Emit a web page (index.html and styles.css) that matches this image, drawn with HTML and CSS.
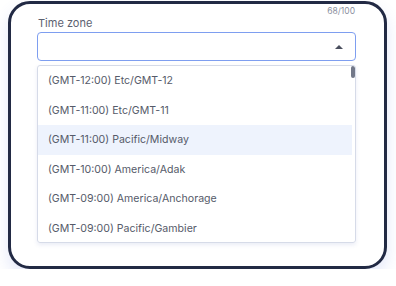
FILE: index.html
```html
<!DOCTYPE html>
<html lang="en">
<head>
    <meta charset="UTF-8">
    <meta name="viewport" content="width=device-width, initial-scale=1.0">
    <title>Time zone</title>
    <link rel="stylesheet" href="styles.css">
</head>
<body>
    <div class="frame">
        <div class="counter">68/100</div>
        <label class="label">Time zone</label>
        <div class="select">
            <span class="caret"></span>
        </div>
        <div class="dropdown">
            <div class="option">(GMT-12:00) Etc/GMT-12</div>
            <div class="option">(GMT-11:00) Etc/GMT-11</div>
            <div class="option active">(GMT-11:00) Pacific/Midway</div>
            <div class="option">(GMT-10:00) America/Adak</div>
            <div class="option">(GMT-09:00) America/Anchorage</div>
            <div class="option">(GMT-09:00) Pacific/Gambier</div>
            <div class="scrollbar"></div>
        </div>
    </div>
</body>
</html>
```

FILE: styles.css
```css
body {
    font-family: Inter, "Open Sans", sans-serif;
    margin: 0;
    padding: 1px 9px 0 8px;
    background-color: white;
}
.frame {
    height: 268px;
    box-sizing: border-box;
    border: 3px solid #222a44;
    border-radius: 22px;
    background-color: #fff;
    padding: 0 28px 0 26px;
    box-shadow: 0 8px 16px rgba(90, 110, 220, 0.16);
}
.counter {
    text-align: right;
    font-size: 8.5px;
    line-height: 11px;
    padding-top: 2px;
    color: #8b90a0;
    padding-right: 1px;
}
.label {
    display: block;
    font-size: 11px;
    line-height: 14px;
    margin-top: -1px;
    color: #5c6170;
    padding-left: 1px;
    margin-bottom: 2px;
}
.select {
    height: 29px;
    box-sizing: border-box;
    border: 1px solid #7e9ef0;
    border-radius: 4px;
    display: flex;
    align-items: center;
    justify-content: flex-end;
    padding-right: 12px;
}
.caret {
    width: 0;
    height: 0;
    border-left: 4px solid transparent;
    border-right: 4px solid transparent;
    border-bottom: 4px solid #4a4f5e;
}
.dropdown {
    position: relative;
    margin-top: 4px;
    height: 178px;
    overflow: hidden;
    box-sizing: border-box;
    border: 1px solid #d6dbe8;
    border-radius: 3px;
    padding-right: 3px;
    box-shadow: 0 2px 4px rgba(80, 100, 180, 0.12);
}
.option {
    height: 29.6px;
    line-height: 29.6px;
    padding-left: 10px;
    font-size: 10.6px;
    color: #555a69;
    white-space: nowrap;
}
.option.active {
    background-color: #eef3fd;
}
.scrollbar {
    position: absolute;
    top: 0;
    right: 0;
    width: 4px;
    height: 12px;
    border-radius: 2px;
    background-color: #727889;
}
```
